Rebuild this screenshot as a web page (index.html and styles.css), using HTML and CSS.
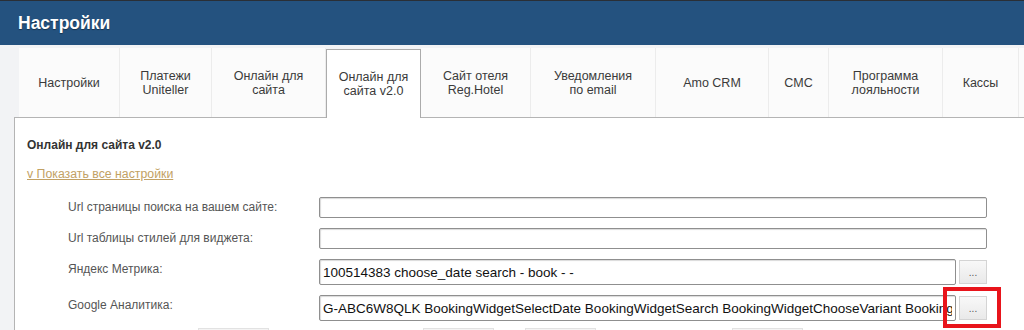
FILE: index.html
```html
<!DOCTYPE html>
<html lang="ru">
  <head>
    <meta charset="UTF-8" />
    <meta name="viewport" content="width=device-width, initial-scale=1.0" />
    <title>Настройки</title>
    <link rel="stylesheet" href="styles.css">
  </head>
  <body>
    <div class="header">
      <h1>Настройки</h1>
    </div>

    <div class="page">
      <ul class="tabs">
        <li class="tab">Настройки</li>
        <li class="tab">Платежи<br>Uniteller</li>
        <li class="tab">Онлайн для<br>сайта</li>
        <li class="tab active">Онлайн для<br>сайта v2.0</li>
        <li class="tab">Сайт отеля<br>Reg.Hotel</li>
        <li class="tab">Уведомления<br>по email</li>
        <li class="tab">Amo CRM</li>
        <li class="tab">СМС</li>
        <li class="tab">Программа<br>лояльности</li>
        <li class="tab">Кассы</li>
        <li class="tab"></li>
      </ul>

      <div class="panel">
        <div class="panel-title">Онлайн для сайта v2.0</div>
        <a href="#" class="toggle-link">v Показать все настройки</a>

        <div class="form">
          <label class="form-label">Url страницы поиска на вашем сайте:</label>
          <div class="form-field">
            <input type="text" class="text-input" />
          </div>

          <label class="form-label">Url таблицы стилей для виджета:</label>
          <div class="form-field">
            <input type="text" class="text-input" />
          </div>

          <label class="form-label">Яндекс Метрика:</label>
          <div class="form-field">
            <input type="text" class="text-input tall" value="100514383 choose_date search - book - -" />
            <span class="btn-wrap"><button class="more-btn">...</button></span>
          </div>

          <label class="form-label">Google Аналитика:</label>
          <div class="form-field">
            <input type="text" class="text-input tall" value="G-ABC6W8QLK BookingWidgetSelectDate BookingWidgetSearch BookingWidgetChooseVariant BookingWidgetBook" />
            <span class="btn-wrap">
              <button class="more-btn">...</button>
              <span class="highlight"></span>
            </span>
          </div>
        </div>

        <div class="actions">
          <button class="action-btn"></button>
          <button class="action-btn"></button>
          <button class="action-btn"></button>
          <button class="action-btn"></button>
        </div>
      </div>
    </div>
  </body>
</html>
```

FILE: styles.css
```css
body {
  font-family: "Liberation Sans", Arial, sans-serif;
  margin: 0;
  padding: 0;
  background-color: #fff;
  overflow: hidden;
}

.header {
  height: 44px;
  border-top: 1px solid #2a2f36;
  background-color: #24527f;
  padding-left: 18px;
}

.header h1 {
  margin: 0;
  font-size: 17.5px;
  line-height: 45px;
  color: #fff;
  text-shadow: 0 1px 1px rgba(0, 0, 0, 0.4);
}

.page {
  background-color: #f2f3f5;
  padding: 3px 0 0 14px;
}

.tabs {
  display: flex;
  list-style: none;
  margin: 0 0 0 5px;
  padding: 0;
  height: 69px;
  position: relative;
  z-index: 1;
}

.tab {
  flex: none;
  box-sizing: border-box;
  display: flex;
  align-items: center;
  justify-content: center;
  text-align: center;
  font-size: 12.5px;
  line-height: 14px;
  color: #3a3a3a;
  background-color: #fbfbfb;
  border-right: 1px solid #ececec;
}

.tab:nth-child(1) { width: 101px; }
.tab:nth-child(2) { width: 92px; }
.tab:nth-child(3) { width: 114px; }
.tab:nth-child(4) { width: 95px; }
.tab:nth-child(5) { width: 110px; }
.tab:nth-child(6) { width: 125px; }
.tab:nth-child(7) { width: 113px; }
.tab:nth-child(8) { width: 60px; }
.tab:nth-child(9) { width: 114px; }
.tab:nth-child(10) { width: 76px; }
.tab:nth-child(11) { width: 110px; }

.tab.active {
  background-color: #fff;
  border: 1px solid #ababab;
  border-bottom: none;
  margin-top: 1px;
  height: 69px;
}

.panel {
  background-color: #fff;
  border-top: 1px solid #b4b4b4;
  border-left: 1px solid #b4b4b4;
  padding: 19px 0 0 12px;
  height: 300px;
}

.panel-title {
  font-size: 12px;
  font-weight: bold;
  color: #333;
  line-height: 16px;
}

.toggle-link {
  display: inline-block;
  margin-top: 13px;
  font-size: 12.3px;
  line-height: 16px;
  color: #c2a164;
}

.form {
  display: grid;
  grid-template-columns: 251px 668px;
  row-gap: 10px;
  margin: 15px 0 0 41px;
  align-items: center;
}

.form-label {
  font-size: 12px;
  color: #555;
  align-self: start;
  padding-top: 3px;
}

.form-field {
  display: flex;
  gap: 3px;
}

.text-input {
  flex: 1;
  min-width: 0;
  box-sizing: border-box;
  height: 21px;
  border: 1px solid #8f8f8f;
  border-radius: 2px;
  box-shadow: inset 1px 1px 1px rgba(0, 0, 0, 0.15);
  font-family: "Liberation Sans", Arial, sans-serif;
  font-size: 13.5px;
  color: #111;
  padding: 0 3px;
}

.text-input.tall {
  height: 26px;
}

.btn-wrap {
  position: relative;
  display: flex;
}

.more-btn {
  width: 28px;
  height: 24px;
  margin-top: 1px;
  border: 1px solid #d4d4d4;
  background: linear-gradient(#f8f8f8, #e9e9e9);
  color: #555;
  font-size: 10px;
  padding: 0;
}

.highlight {
  position: absolute;
  left: -16px;
  top: -8px;
  width: 50px;
  height: 33px;
  border: 4px solid #e8141b;
}

.actions {
  display: flex;
  margin: 7px 0 0 171px;
}

.action-btn {
  width: 71px;
  height: 24px;
  border: 1px solid #e2e2e2;
  background-color: #f4f4f4;
}

.action-btn:nth-child(2) { margin-left: 154px; }
.action-btn:nth-child(3) { margin-left: 31px; }
.action-btn:nth-child(4) { margin-left: 136px; }
```
